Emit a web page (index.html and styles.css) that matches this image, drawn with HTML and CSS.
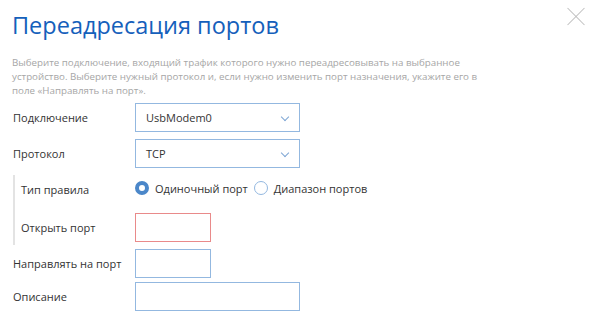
FILE: index.html
```html
<!DOCTYPE html>
<html>
<head>
<meta charset="UTF-8">
<title>Переадресация портов</title>
<link rel="stylesheet" href="styles.css">
</head>
<body>
<div class="dialog">
	<span class="close"></span>
	<h1 class="title">Переадресация портов</h1>
	<p class="hint">Выберите подключение, входящий трафик которого нужно переадресовывать на выбранное устройство. Выберите нужный протокол и, если нужно изменить порт назначения, укажите его в поле «Направлять на порт».</p>

	<form class="form">
		<div class="row">
			<label class="label">Подключение</label>
			<div class="select wide">UsbModem0<span class="arrow"></span></div>
		</div>
		<div class="row">
			<label class="label">Протокол</label>
			<div class="select wide">TCP<span class="arrow"></span></div>
		</div>

		<div class="group">
			<div class="row radio-row">
				<label class="label">Тип правила</label>
				<div class="radios">
					<span class="radio checked"></span><span class="radio-text">Одиночный порт</span>
					<span class="radio"></span><span class="radio-text">Диапазон портов</span>
				</div>
			</div>
			<div class="row">
				<label class="label">Открыть порт</label>
				<div class="input short error"></div>
			</div>
		</div>

		<div class="row tight">
			<label class="label">Направлять на порт</label>
			<div class="input short"></div>
		</div>
		<div class="row tight">
			<label class="label">Описание</label>
			<div class="input wide"></div>
		</div>
	</form>
</div>
</body>
</html>
```

FILE: styles.css
```css
body
{
	margin: 0;
	background: #ffffff;
	font-family: "Open Sans", "Noto Sans", sans-serif;
	color: #333333;
}
.dialog
{
	position: relative;
	padding: 0 12px;
}
.close
{
	position: absolute;
	top: 8px;
	right: 8px;
	width: 18px;
	height: 18px;
}
.close::before, .close::after
{
	content: "";
	position: absolute;
	left: -3px;
	top: 8px;
	width: 24px;
	height: 1px;
	background: #bdbdbd;
	transform: rotate(45deg);
}
.close::after
{
	transform: rotate(-45deg);
}
.title
{
	margin: 0;
	padding-top: 9px;
	font-size: 23.5px;
	font-weight: normal;
	line-height: 32px;
	color: #1560bb;
}
.hint
{
	margin: 15px 0 0 0;
	width: 482px;
	font-size: 9.76px;
	line-height: 14px;
	color: #a6a6a6;
}
.form
{
	margin-top: 5px;
	font-size: 11px;
}
.row
{
	display: grid;
	grid-template-columns: 123px auto;
	align-items: center;
	margin-bottom: 7px;
}
.row.tight
{
	margin-bottom: 4px;
}
.label
{
	padding-left: 1px;
}
.select, .input
{
	box-sizing: border-box;
	height: 29px;
	border: 1px solid #93b8e0;
	background: #ffffff;
}
.select
{
	position: relative;
	padding: 0 10px;
	line-height: 27px;
	font-size: 11px;
}
.wide
{
	width: 165px;
}
.short
{
	width: 76px;
}
.input.error
{
	border-color: #e98a8a;
}
.arrow
{
	position: absolute;
	right: 11px;
	top: 10px;
	width: 5px;
	height: 5px;
	border-right: 1px solid #7ea6d4;
	border-bottom: 1px solid #7ea6d4;
	transform: rotate(45deg);
}
.group
{
	margin: 0 0 4px 1px;
	padding: 4px 0 3px 5px;
	border-left: 2px solid #e3e3e3;
}
.group .row
{
	grid-template-columns: 115px auto;
}
.group .row:last-child
{
	margin-bottom: 0;
}
.radio-row
{
	height: 16px;
	margin-bottom: 18px !important;
}
.radio-row .label
{
	padding-top: 3px;
}
.radios
{
	display: flex;
	align-items: center;
}
.radio
{
	box-sizing: border-box;
	width: 14px;
	height: 14px;
	border: 1px solid #93b8e0;
	border-radius: 50%;
	margin-right: 6px;
}
.radio.checked
{
	border: 4px solid #4b87c9;
	background: #ffffff;
}
.radio-text
{
	margin-right: 6px;
}
```
